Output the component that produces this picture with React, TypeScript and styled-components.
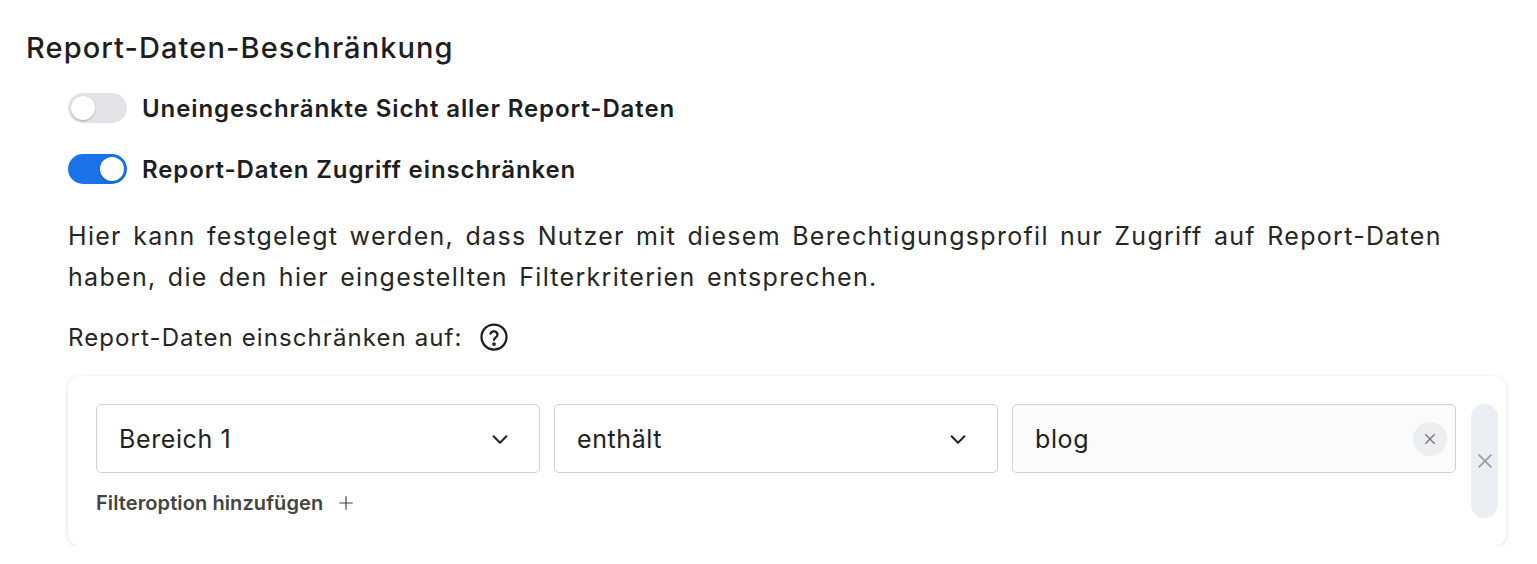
import React from "react";
import styled, { createGlobalStyle } from "styled-components";

const Global = createGlobalStyle`
  body { margin: 0; background: #fff; font-family: Inter, "Noto Sans", sans-serif; color: #1e1e1e; }
`;
const Page = styled.div`padding: 28px 31px 0 26px;`;
const Title = styled.h2`margin: 0 0 26px; font-size: 29px; font-weight: 500; letter-spacing: 1.1px; line-height: 40px;`;
const Body = styled.div`padding-left: 42px; display: flex; flex-direction: column;`;
const ToggleRow = styled.div`display: flex; align-items: center; gap: 15px; height: 28px; margin-bottom: 33px;`;
const Track = styled.div<{ on?: boolean }>`
  width: 59px; height: 30px; border-radius: 15px; box-sizing: border-box; padding: 3px;
  background: ${p => (p.on ? "#1a73e8" : "#e2e4e7")};
  display: flex; justify-content: ${p => (p.on ? "flex-end" : "flex-start")};
`;
const Knob = styled.div`width: 24px; height: 24px; border-radius: 50%; background: #fff; box-shadow: 0 1px 2px rgba(0,0,0,.25);`;
const Label = styled.span`font-size: 24px; font-weight: 600; letter-spacing: 0.9px;`;
const Para = styled.p`margin: 0; font-size: 25px; line-height: 41px; letter-spacing: 1.3px; word-spacing: 3px; color: #262626;`;
const SubRow = styled.div`display: flex; align-items: center; gap: 16px; margin-top: 24px; font-size: 24px; letter-spacing: 1.1px; color: #262626;`;
const Card = styled.div`
  margin-top: 24px; width: 1438px; box-sizing: border-box; background: #fff; border-radius: 12px;
  box-shadow: 0 1px 5px rgba(0,0,0,.13); padding: 28px 8px 28px 28px; display: flex; gap: 15px;
`;
const Main = styled.div`flex: 1; display: flex; flex-direction: column;`;
const Fields = styled.div`display: flex; gap: 14px;`;
const Field = styled.div<{ light?: boolean }>`
  flex: 1; height: 69px; box-sizing: border-box; border: 1px solid #cfd1d4; border-radius: 5px;
  background: ${p => (p.light ? "#fbfbfc" : "#fff")};
  display: flex; align-items: center; justify-content: space-between; padding: 0 28px 0 22px;
  font-size: 25px; letter-spacing: 0.6px; color: #222;
`;
const Clear = styled.div`width: 34px; height: 34px; border-radius: 50%; background: #eceff2; display: flex; align-items: center; justify-content: center; margin-right: -20px;`;
const Add = styled.div`margin-top: 18px; display: flex; align-items: center; gap: 14px; font-size: 20px; font-weight: 600; color: #444; letter-spacing: 0.1px;`;
const Remove = styled.div`width: 27px; height: 114px; border-radius: 14px; background: #ebeef2; display: flex; align-items: center; justify-content: center;`;

const Chevron = () => (
  <svg width="22" height="22" viewBox="0 0 24 24" fill="none" stroke="#222" strokeWidth="2.2" strokeLinecap="round" strokeLinejoin="round"><path d="M5 9l7 7 7-7" /></svg>
);
const X = ({ s, c }: { s: number; c: string }) => (
  <svg width={s} height={s} viewBox="0 0 24 24" fill="none" stroke={c} strokeWidth="2"><path d="M5 5l14 14M19 5L5 19" /></svg>
);

export default function App() {
  return (
    <Page>
      <Global />
      <Title>Report-Daten-Beschränkung</Title>
      <Body>
        <ToggleRow><Track><Knob /></Track><Label>Uneingeschränkte Sicht aller Report-Daten</Label></ToggleRow>
        <ToggleRow><Track on><Knob /></Track><Label>Report-Daten Zugriff einschränken</Label></ToggleRow>
        <Para>Hier kann festgelegt werden, dass Nutzer mit diesem Berechtigungsprofil nur Zugriff auf Report-Daten haben, die den hier eingestellten Filterkriterien entsprechen.</Para>
        <SubRow>
          Report-Daten einschränken auf:
          <svg width="30" height="30" viewBox="0 0 24 24" fill="none" stroke="#1e1e1e" strokeWidth="1.8" strokeLinecap="round"><circle cx="12" cy="12" r="10" /><path d="M9.2 9.3a2.9 2.9 0 0 1 5.6 1c0 1.9-2.8 2.4-2.8 4" /><circle cx="12" cy="17.6" r="0.6" fill="#1e1e1e" /></svg>
        </SubRow>
        <Card>
          <Main>
            <Fields>
              <Field>Bereich 1<Chevron /></Field>
              <Field>enthält<Chevron /></Field>
              <Field light>blog<Clear><X s={16} c="#777" /></Clear></Field>
            </Fields>
            <Add>Filteroption hinzufügen
              <svg width="18" height="18" viewBox="0 0 24 24" fill="none" stroke="#444" strokeWidth="1.6"><path d="M12 3v18M3 12h18" /></svg>
            </Add>
          </Main>
          <Remove><X s={22} c="#9aa0a6" /></Remove>
        </Card>
      </Body>
    </Page>
  );
}
